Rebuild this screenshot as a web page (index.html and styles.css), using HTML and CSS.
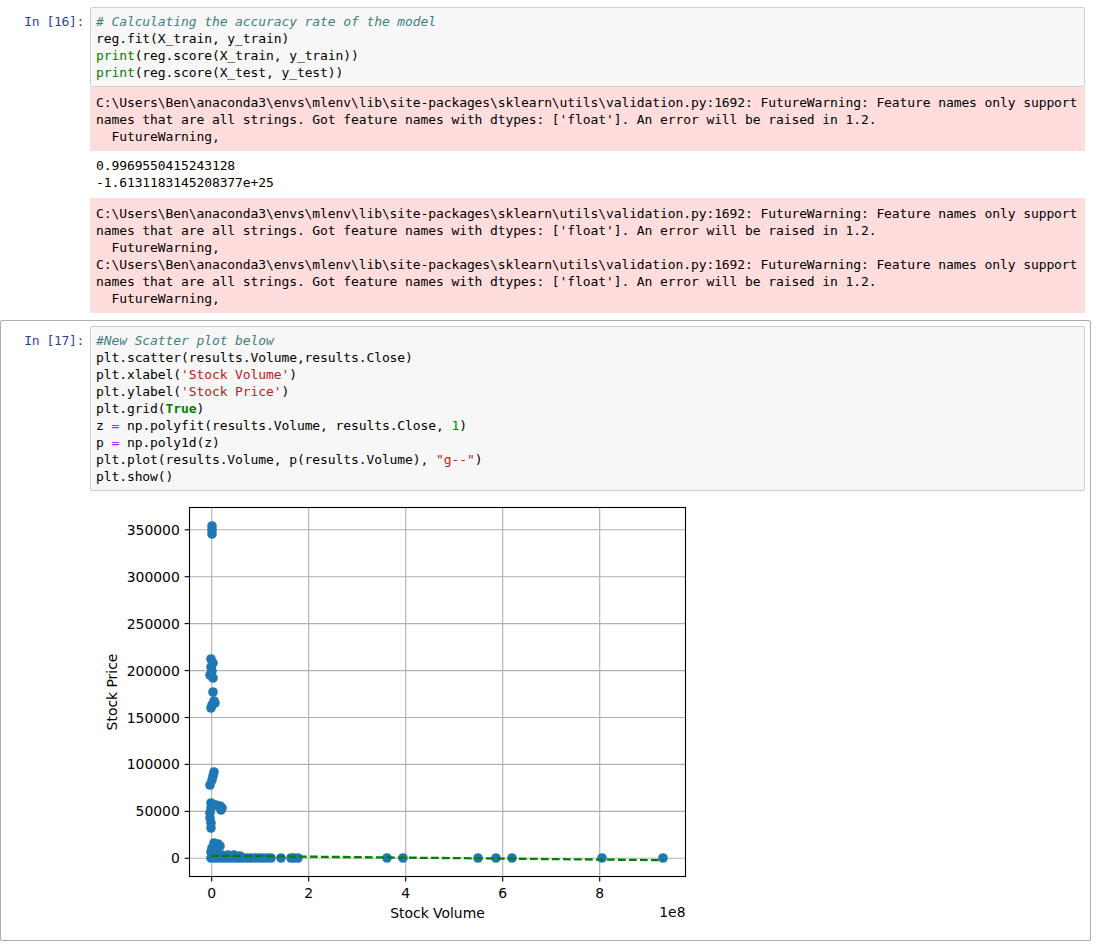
FILE: index.html
```html
<!DOCTYPE html>
<html>
<head>
<meta charset="utf-8">
<link rel="stylesheet" href="styles.css">
</head>
<body>
<div class="notebook">
  <div class="cell">
    <div class="row">
      <div class="prompt">In [16]:</div>
      <div class="code"><pre><span class="cm"># Calculating the accuracy rate of the model</span>
reg.fit(X_train, y_train)
<span class="bi">print</span>(reg.score(X_train, y_train))
<span class="bi">print</span>(reg.score(X_test, y_test))</pre></div>
    </div>
    <div class="row">
      <div class="prompt"></div>
      <div class="outputs">
        <pre class="stderr">C:\Users\Ben\anaconda3\envs\mlenv\lib\site-packages\sklearn\utils\validation.py:1692: FutureWarning: Feature names only support
names that are all strings. Got feature names with dtypes: ['float']. An error will be raised in 1.2.
  FutureWarning,</pre>
        <pre class="stdout">0.9969550415243128
-1.6131183145208377e+25</pre>
        <pre class="stderr">C:\Users\Ben\anaconda3\envs\mlenv\lib\site-packages\sklearn\utils\validation.py:1692: FutureWarning: Feature names only support
names that are all strings. Got feature names with dtypes: ['float']. An error will be raised in 1.2.
  FutureWarning,
C:\Users\Ben\anaconda3\envs\mlenv\lib\site-packages\sklearn\utils\validation.py:1692: FutureWarning: Feature names only support
names that are all strings. Got feature names with dtypes: ['float']. An error will be raised in 1.2.
  FutureWarning,</pre>
      </div>
    </div>
  </div>

  <div class="cell selected">
    <div class="row">
      <div class="prompt">In [17]:</div>
      <div class="code"><pre><span class="cm">#New Scatter plot below</span>
plt.scatter(results.Volume,results.Close)
plt.xlabel(<span class="st">'Stock Volume'</span>)
plt.ylabel(<span class="st">'Stock Price'</span>)
plt.grid(<span class="kw">True</span>)
z <span class="op">=</span> np.polyfit(results.Volume, results.Close, <span class="nu">1</span>)
p <span class="op">=</span> np.poly1d(z)
plt.plot(results.Volume, p(results.Volume), <span class="st">"g--"</span>)
plt.show()</pre></div>
    </div>
    <div class="row">
      <div class="prompt"></div>
      <div class="outputs">
        <svg class="figure" width="600" height="443" viewBox="0 0 600 443" xmlns="http://www.w3.org/2000/svg">
          <g transform="translate(-90,-491)">
            <rect x="189.5" y="507.5" width="496" height="369" fill="#fff"/>
            <g stroke="#b0b0b0" stroke-width="1.1" fill="none">
              <line x1="211.7" y1="507.5" x2="211.7" y2="876.5"/>
              <line x1="308.7" y1="507.5" x2="308.7" y2="876.5"/>
              <line x1="405.7" y1="507.5" x2="405.7" y2="876.5"/>
              <line x1="502.7" y1="507.5" x2="502.7" y2="876.5"/>
              <line x1="599.7" y1="507.5" x2="599.7" y2="876.5"/>
              <line x1="189.5" y1="858.3" x2="685.5" y2="858.3"/>
              <line x1="189.5" y1="811.4" x2="685.5" y2="811.4"/>
              <line x1="189.5" y1="764.4" x2="685.5" y2="764.4"/>
              <line x1="189.5" y1="717.5" x2="685.5" y2="717.5"/>
              <line x1="189.5" y1="670.6" x2="685.5" y2="670.6"/>
              <line x1="189.5" y1="623.6" x2="685.5" y2="623.6"/>
              <line x1="189.5" y1="576.7" x2="685.5" y2="576.7"/>
              <line x1="189.5" y1="529.8" x2="685.5" y2="529.8"/>
            </g>
            <g fill="#1f77b4">
              <circle cx="212" cy="526" r="4.8"/>
              <circle cx="212" cy="530" r="4.8"/>
              <circle cx="212" cy="534" r="4.8"/>
              <circle cx="211" cy="659" r="4.8"/>
              <circle cx="213" cy="663" r="4.8"/>
              <circle cx="211" cy="667" r="4.8"/>
              <circle cx="212" cy="671" r="4.8"/>
              <circle cx="210" cy="675" r="4.8"/>
              <circle cx="213" cy="678" r="4.8"/>
              <circle cx="213" cy="692" r="4.8"/>
              <circle cx="214" cy="701" r="4.8"/>
              <circle cx="212" cy="705" r="4.8"/>
              <circle cx="211" cy="708" r="4.8"/>
              <circle cx="215" cy="703" r="4.8"/>
              <circle cx="214" cy="772" r="4.8"/>
              <circle cx="213" cy="776" r="4.8"/>
              <circle cx="212" cy="780" r="4.8"/>
              <circle cx="210" cy="785" r="4.8"/>
              <circle cx="211" cy="803" r="4.8"/>
              <circle cx="211" cy="808" r="4.8"/>
              <circle cx="210" cy="813" r="4.8"/>
              <circle cx="210" cy="818" r="4.8"/>
              <circle cx="211" cy="823" r="4.8"/>
              <circle cx="211" cy="828" r="4.8"/>
              <circle cx="216" cy="805" r="4.8"/>
              <circle cx="220" cy="806" r="4.8"/>
              <circle cx="222" cy="808" r="4.8"/>
              <circle cx="221" cy="810" r="4.8"/>
              <circle cx="214" cy="843" r="4.8"/>
              <circle cx="218" cy="844" r="4.8"/>
              <circle cx="220" cy="846" r="4.8"/>
              <circle cx="216" cy="848" r="4.8"/>
              <circle cx="212" cy="848" r="4.8"/>
              <circle cx="211" cy="852" r="4.8"/>
              <circle cx="216" cy="852" r="4.8"/>
              <circle cx="213" cy="856" r="4.8"/>
              <circle cx="211" cy="858" r="4.8"/>
              <circle cx="215" cy="858" r="4.8"/>
              <circle cx="219" cy="858" r="4.8"/>
              <circle cx="223" cy="858" r="4.8"/>
              <circle cx="227" cy="858" r="4.8"/>
              <circle cx="231" cy="858" r="4.8"/>
              <circle cx="235" cy="858" r="4.8"/>
              <circle cx="239" cy="858" r="4.8"/>
              <circle cx="243" cy="858" r="4.8"/>
              <circle cx="247" cy="858" r="4.8"/>
              <circle cx="251" cy="858" r="4.8"/>
              <circle cx="255" cy="858" r="4.8"/>
              <circle cx="259" cy="858" r="4.8"/>
              <circle cx="263" cy="858" r="4.8"/>
              <circle cx="267" cy="858" r="4.8"/>
              <circle cx="271" cy="858" r="4.8"/>
              <circle cx="216" cy="855" r="4.8"/>
              <circle cx="222" cy="855" r="4.8"/>
              <circle cx="228" cy="855" r="4.8"/>
              <circle cx="234" cy="855" r="4.8"/>
              <circle cx="240" cy="856" r="4.8"/>
              <circle cx="281" cy="858" r="4.8"/>
              <circle cx="291" cy="858" r="4.8"/>
              <circle cx="294" cy="858" r="4.8"/>
              <circle cx="298" cy="858" r="4.8"/>
              <circle cx="387" cy="858" r="4.8"/>
              <circle cx="403" cy="858" r="4.8"/>
              <circle cx="478" cy="858" r="4.8"/>
              <circle cx="496" cy="858" r="4.8"/>
              <circle cx="512" cy="858" r="4.8"/>
              <circle cx="602" cy="858" r="4.8"/>
              <circle cx="663" cy="858" r="4.8"/>
            </g>
            <line x1="211" y1="855.7" x2="663" y2="860.2" stroke="#008000" stroke-width="2.3" stroke-dasharray="7.7 3.3"/>
            <rect x="189.5" y="507.5" width="496" height="369" fill="none" stroke="#000" stroke-width="1.1"/>
            <g stroke="#000" stroke-width="1.1">
              <line x1="184.6" y1="858.3" x2="189.5" y2="858.3"/>
              <line x1="184.6" y1="811.4" x2="189.5" y2="811.4"/>
              <line x1="184.6" y1="764.4" x2="189.5" y2="764.4"/>
              <line x1="184.6" y1="717.5" x2="189.5" y2="717.5"/>
              <line x1="184.6" y1="670.6" x2="189.5" y2="670.6"/>
              <line x1="184.6" y1="623.6" x2="189.5" y2="623.6"/>
              <line x1="184.6" y1="576.7" x2="189.5" y2="576.7"/>
              <line x1="184.6" y1="529.8" x2="189.5" y2="529.8"/>
              <line x1="211.7" y1="876.5" x2="211.7" y2="881.4"/>
              <line x1="308.7" y1="876.5" x2="308.7" y2="881.4"/>
              <line x1="405.7" y1="876.5" x2="405.7" y2="881.4"/>
              <line x1="502.7" y1="876.5" x2="502.7" y2="881.4"/>
              <line x1="599.7" y1="876.5" x2="599.7" y2="881.4"/>
            </g>
            <g class="ticklabel" text-anchor="end">
              <text x="179.8" y="863.3">0</text>
              <text x="179.8" y="816.4">50000</text>
              <text x="179.8" y="769.4">100000</text>
              <text x="179.8" y="722.5">150000</text>
              <text x="179.8" y="675.6">200000</text>
              <text x="179.8" y="628.6">250000</text>
              <text x="179.8" y="581.7">300000</text>
              <text x="179.8" y="534.8">350000</text>
            </g>
            <g class="ticklabel" text-anchor="middle">
              <text x="211.7" y="898">0</text>
              <text x="308.7" y="898">2</text>
              <text x="405.7" y="898">4</text>
              <text x="502.7" y="898">6</text>
              <text x="599.7" y="898">8</text>
            </g>
            <text class="ticklabel" x="437.5" y="917.5" text-anchor="middle">Stock Volume</text>
            <text class="ticklabel" x="685.5" y="916.5" text-anchor="end">1e8</text>
            <text class="ticklabel" x="116.5" y="692" text-anchor="middle" transform="rotate(-90 116.5 692)">Stock Price</text>
          </g>
        </svg>
      </div>
    </div>
  </div>
</div>
</body>
</html>
```

FILE: styles.css
```css
* {
  box-sizing: border-box;
}

body {
  margin: 0;
  background: #ffffff;
  font-family: "DejaVu Sans Mono", "Liberation Mono", monospace;
  font-size: 13px;
  color: #000;
}

.notebook {
  width: 1091px;
  padding-top: 1px;
}

.cell {
  border: 1px solid transparent;
  border-radius: 2px;
  padding: 5px 5px 6px 5px;
}

.cell.selected {
  border-color: #ababab;
}

.row {
  display: flex;
  align-items: flex-start;
}

.prompt {
  flex: 0 0 84px;
  width: 84px;
  padding: 6px 6px 0 0;
  text-align: right;
  color: #303f9f;
  font-family: "DejaVu Sans Mono", "Liberation Mono", monospace;
  font-size: 13px;
  line-height: 17px;
  letter-spacing: -0.35px;
  white-space: pre;
}

.code {
  flex: 1 1 auto;
  min-width: 0;
  background: #f7f7f7;
  border: 1px solid #cfcfcf;
  border-radius: 2px;
  padding: 5px 5px;
}

pre {
  margin: 0;
  font-family: "DejaVu Sans Mono", "Liberation Mono", monospace;
  font-size: 13px;
  line-height: 17px;
  letter-spacing: -0.1px;
  white-space: pre;
}

.cm {
  color: #408080;
  font-style: italic;
}

.bi {
  color: #008000;
}

.kw {
  color: #008000;
  font-weight: bold;
}

.st {
  color: #ba2121;
}

.op {
  color: #aa22ff;
}

.nu {
  color: #008800;
}

.outputs {
  flex: 1 1 auto;
  min-width: 0;
}

.stderr {
  background: #ffdddd;
  padding: 7px 6px 6px 6px;
}

.stdout {
  padding: 6px 6px 7px 6px;
}

.figure {
  display: block;
}

.ticklabel {
  font-family: "DejaVu Sans", sans-serif;
  font-size: 13.9px;
  fill: #000;
}
```
